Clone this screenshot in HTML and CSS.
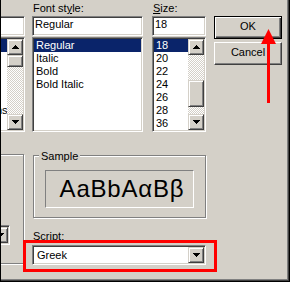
FILE: index.html
```html
<!DOCTYPE html>
<html lang="en">

<head>
    <meta charset="UTF-8">
    <meta name="viewport" content="width=device-width, initial-scale=1.0">
    <title>Font</title>
    <link rel="stylesheet" href="styles.css">
</head>

<body>
    <div class="frame">
        <div class="dialog">
            <div class="top">
                <div class="col col-font">
                    <div class="label"><u>F</u>ont:</div>
                    <div class="field">Arial</div>
                    <div class="list">
                        <div class="rows">
                            <div class="row sel">Arial</div>
                            <div class="row">Arial Black</div>
                            <div class="row">Georgia</div>
                            <div class="row">Impact</div>
                            <div class="row">Symbol</div>
                            <div class="row">Lucida Sans</div>
                            <div class="row">Tahoma</div>
                        </div>
                        <div class="scroll">
                            <div class="sbtn"><svg width="7" height="4" viewBox="0 0 7 4"><path d="M3 0h1v1h1v1h1v1h1v1H0V3h1V2h1V1h1z" /></svg></div>
                            <div class="track"><div class="thumb thumb-font"></div></div>
                            <div class="sbtn"><svg width="7" height="4" viewBox="0 0 7 4"><path d="M0 0h7v1H6v1H5v1H4v1H3V3H2V2H1V1H0z" /></svg></div>
                        </div>
                    </div>
                </div>
                <div class="col col-style">
                    <div class="label">Font st<u>y</u>le:</div>
                    <div class="field">Regular</div>
                    <div class="list">
                        <div class="rows">
                            <div class="row sel">Regular</div>
                            <div class="row">Italic</div>
                            <div class="row">Bold</div>
                            <div class="row">Bold Italic</div>
                        </div>
                    </div>
                </div>
                <div class="col col-size">
                    <div class="label"><u>S</u>ize:</div>
                    <div class="field">18</div>
                    <div class="list">
                        <div class="rows">
                            <div class="row sel">18</div>
                            <div class="row">20</div>
                            <div class="row">22</div>
                            <div class="row">24</div>
                            <div class="row">26</div>
                            <div class="row">28</div>
                            <div class="row">36</div>
                        </div>
                        <div class="scroll">
                            <div class="sbtn"><svg width="7" height="4" viewBox="0 0 7 4"><path d="M3 0h1v1h1v1h1v1h1v1H0V3h1V2h1V1h1z" /></svg></div>
                            <div class="track"><div class="thumb thumb-size"></div></div>
                            <div class="sbtn"><svg width="7" height="4" viewBox="0 0 7 4"><path d="M0 0h7v1H6v1H5v1H4v1H3V3H2V2H1V1H0z" /></svg></div>
                        </div>
                    </div>
                </div>
                <div class="buttons">
                    <div class="btn default">OK</div>
                    <div class="btn">Cancel</div>
                </div>
            </div>

            <div class="bottom">
                <div class="group effects">
                    <div class="legend">Effects</div>
                    <div class="label color-label"><u>C</u>olor:</div>
                    <div class="combo">
                        <div class="combo-text">Black</div>
                        <div class="sbtn combo-btn"><svg width="7" height="4" viewBox="0 0 7 4"><path d="M0 0h7v1H6v1H5v1H4v1H3V3H2V2H1V1H0z" /></svg></div>
                    </div>
                </div>
                <div class="side">
                    <div class="group sample-group">
                        <div class="legend">Sample</div>
                        <div class="sample">AaBbAαBβ</div>
                    </div>
                    <div class="label script-label">Sc<u>r</u>ipt:</div>
                    <div class="combo">
                        <div class="combo-text">Greek</div>
                        <div class="sbtn combo-btn"><svg width="7" height="4" viewBox="0 0 7 4"><path d="M0 0h7v1H6v1H5v1H4v1H3V3H2V2H1V1H0z" /></svg></div>
                    </div>
                </div>
            </div>
        </div>

        <!-- annotation -->
        <div class="highlight"></div>
        <svg class="arrow" width="30" height="85" viewBox="0 0 30 85">
            <polygon points="13.5,4 6,19 21,19" fill="#f00" />
            <rect x="12" y="19" width="3" height="59" fill="#f00" />
        </svg>
    </div>
</body>

</html>
```

FILE: styles.css
```css
body {
    margin: 0;
    font-family: "Liberation Sans", Arial, sans-serif;
    font-size: 11px;
    color: #000;
}

.frame {
    position: relative;
    width: 290px;
    height: 282px;
    box-sizing: border-box;
    overflow: hidden;
    background: #d4d0c8;
    border: 1px solid #000;
    border-top: 0;
    box-shadow: inset -1px -1px 0 #404040, inset -2px -2px 0 #808080;
}

.dialog {
    margin-left: -58px;
}

.top {
    display: flex;
    padding-top: 2px;
}

.col {
    display: flex;
    flex-direction: column;
}

.col-font {
    width: 82px;
}

.col-style {
    width: 111px;
    margin-left: 7px;
}

.col-size {
    width: 54px;
    margin-left: 9px;
}

.label {
    height: 13px;
    line-height: 13px;
    margin-bottom: 1px;
    padding-left: 1px;
    white-space: nowrap;
}

/* sunken white boxes */
.field,
.list,
.combo {
    box-sizing: border-box;
    background: #fff;
    border: 1px solid;
    border-color: #808080 #fff #fff #808080;
    box-shadow: inset 1px 1px 0 #404040, inset -1px -1px 0 #d4d0c8;
}

.field {
    height: 20px;
    padding: 1px 2px;
    line-height: 13px;
    white-space: nowrap;
}

.list {
    margin-top: 1px;
    height: 95px;
    padding: 1px;
    display: flex;
}

.rows {
    flex: 1;
    overflow: hidden;
}

.row {
    height: 13px;
    line-height: 13px;
    padding-left: 2px;
    white-space: nowrap;
}

.row.sel {
    background: #0a246a;
    color: #fff;
}

.scroll {
    width: 16px;
    display: flex;
    flex-direction: column;
}

/* raised 3d bits */
.sbtn,
.thumb {
    box-sizing: border-box;
    background: #d4d0c8;
    border: 1px solid;
    border-color: #d4d0c8 #404040 #404040 #d4d0c8;
    box-shadow: inset 1px 1px 0 #fff, inset -1px -1px 0 #808080;
}

.sbtn {
    height: 16px;
    display: flex;
    align-items: center;
    justify-content: center;
}

.track {
    flex: 1;
    background: repeating-conic-gradient(#fff 0 25%, #d4d0c8 0 50%) 0 0 / 2px 2px;
}

.thumb-font {
    height: 12px;
}

.thumb-size {
    margin-top: 25px;
    height: 27px;
}

.buttons {
    width: 68px;
    margin-left: 8px;
    padding-top: 14px;
    display: flex;
    flex-direction: column;
    gap: 3px;
}

.btn {
    height: 23px;
    box-sizing: border-box;
    border: 1px solid;
    border-color: #fff #404040 #404040 #fff;
    box-shadow: inset -1px -1px 0 #808080;
    text-align: center;
    line-height: 19px;
}

.btn.default {
    border-color: #000;
    box-shadow: inset 1px 1px 0 #fff, inset -1px -1px 0 #404040, inset -2px -2px 0 #808080;
}

.bottom {
    display: flex;
    margin-top: 22px;
}

/* etched group box */
.group {
    box-sizing: border-box;
    border: 1px solid #808080;
    box-shadow: 1px 1px 0 #fff, inset 1px 1px 0 #fff;
}

.legend {
    width: fit-content;
    margin: -6px 0 0 5px;
    padding: 0 2px;
    background: #d4d0c8;
    line-height: 13px;
}

.effects {
    width: 81px;
    height: 110px;
}

.color-label {
    margin: 49px 0 0 6px;
}

.effects .combo {
    width: 60px;
    margin: 1px 13px 0 auto;
}

.side {
    width: 174px;
    margin-left: 8px;
}

.sample-group {
    width: 173px;
    height: 63px;
    margin: 1px 0 0 1px;
}

.sample {
    width: 149px;
    height: 38px;
    margin: 7px 0 0 11px;
    padding-left: 5px;
    box-sizing: border-box;
    border: 1px solid;
    border-color: #808080 #fff #fff #808080;
    font-size: 24px;
    line-height: 36px;
    letter-spacing: 0.8px;
    text-align: center;
    white-space: nowrap;
}

.script-label {
    margin-top: 12px;
    margin-bottom: 2px;
}

.combo {
    height: 20px;
    padding: 1px;
    display: flex;
}

.combo-text {
    flex: 1;
    padding: 2px 0 0 3px;
    line-height: 13px;
    white-space: nowrap;
    overflow: hidden;
}

.combo-btn {
    width: 16px;
}

.highlight {
    position: absolute;
    left: 22px;
    top: 240px;
    width: 194px;
    height: 32px;
    box-sizing: border-box;
    border: 3px solid #f00;
}

.arrow {
    position: absolute;
    left: 254px;
    top: 25px;
}
```
